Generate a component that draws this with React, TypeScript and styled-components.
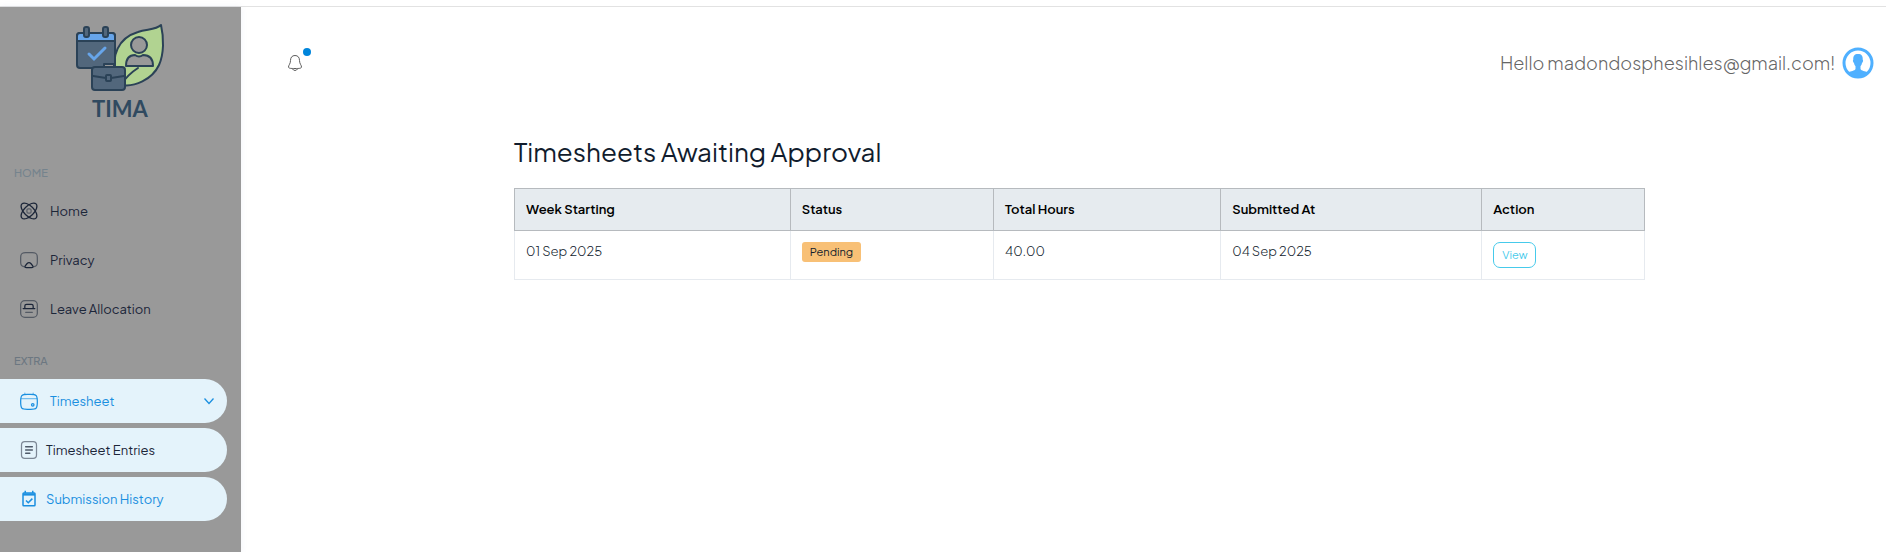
import React from "react";
import styled, { createGlobalStyle, css } from "styled-components";

const GlobalStyle = createGlobalStyle`
  * { box-sizing: border-box; }
  body {
    margin: 0;
    background: #fff;
    color: #2a3547;
    font-family: "Plus Jakarta Sans", Inter, "Liberation Sans", sans-serif;
    font-size: 13px;
    line-height: 20px;
  }
`;

const Page = styled.div`
  display: flex;
  flex-direction: column;
  min-height: 100vh;
  padding-top: 6px;
`;

const Shell = styled.div`
  display: flex;
  flex: 1;
  border-top: 1px solid #e2e2e2;
`;

const Sidebar = styled.aside`
  flex: 0 0 241px;
  padding: 16px 14px 32px 0;
  background: #999;
  box-shadow: 0 0 6px rgba(120, 140, 190, 0.1);
`;

const Brand = styled.a`
  display: block;
  width: 92px;
  margin: 0 0 0 74px;
`;

const Nav = styled.nav`
  padding-top: 35px;
`;

const Caption = styled.h2<{ $tone: string; $spaced?: boolean }>`
  margin: ${(p) => (p.$spaced ? "20px 0 8px" : "0 0 6px")};
  padding-left: 14px;
  color: ${(p) => p.$tone};
  font-size: 11px;
  font-weight: 500;
  line-height: 20px;
`;

const List = styled.ul`
  display: flex;
  flex-direction: column;
  gap: 5px;
  margin: 0;
  padding: 0;
  list-style: none;
`;

const itemStyle = css<{ $filled?: boolean; $active?: boolean; $nested?: boolean }>`
  display: flex;
  align-items: center;
  gap: ${(p) => (p.$nested ? "7px" : "11px")};
  width: 100%;
  height: 44px;
  padding: 0 11px 0 19px;
  border: 0;
  border-radius: 0 22px 22px 0;
  background: ${(p) => (p.$filled ? "#e4f3fb" : "transparent")};
  color: ${(p) => (p.$active ? "#1a8fe0" : "#1c2639")};
  font: inherit;
  font-weight: 400;
  text-align: left;
  text-decoration: none;
  cursor: pointer;
`;

const NavLink = styled.a`
  ${itemStyle}
`;

const NavToggle = styled.button`
  ${itemStyle}
`;

const NavLabel = styled.span`
  flex: 1;
`;

const IconBox = styled.span`
  display: flex;
  flex: 0 0 20px;
  justify-content: center;
`;

const Main = styled.main`
  flex: 1;
  min-width: 0;
`;

const TopBar = styled.header`
  display: flex;
  align-items: center;
  justify-content: space-between;
  padding: 40px 12px 32px 45px;
`;

const BellButton = styled.button`
  position: relative;
  display: flex;
  padding: 0;
  border: 0;
  background: none;
  cursor: pointer;
`;

const Dot = styled.span`
  position: absolute;
  top: -5px;
  right: -7px;
  width: 8px;
  height: 8px;
  border-radius: 50%;
  background: #0085db;
`;

const Account = styled.a`
  display: flex;
  align-items: center;
  gap: 7px;
  color: #666;
  font-size: 18px;
  font-weight: 300;
  line-height: 32px;
  text-decoration: none;
`;

const Content = styled.section`
  max-width: 1211px;
  margin: 0 auto;
  padding: 24px 24px 24px 56px;
`;

const Title = styled.h1`
  margin: 0 0 19px;
  color: #111c2d;
  font-size: 26px;
  font-weight: 400;
  line-height: 34px;
`;

const Table = styled.table`
  width: 100%;
  border-collapse: collapse;
  table-layout: fixed;
  font-size: 13px;
`;

const Col = styled.col<{ $share: number }>`
  width: ${(p) => p.$share}%;
`;

const HeadCell = styled.th`
  padding: 10px 11px 11px;
  border: 1px solid #b6babe;
  background: #e6ebef;
  color: #000;
  font-weight: 600;
  text-align: left;
`;

const Cell = styled.td`
  height: 49px;
  padding: 11px;
  border: 1px solid #e6eaef;
  color: #111c2d;
  font-weight: 300;
  line-height: 18px;
  vertical-align: top;
`;

const Badge = styled.span`
  display: block;
  width: fit-content;
  padding: 0 8px;
  border-radius: 3px;
  background: #f8c076;
  color: #111c2d;
  font-size: 11px;
  font-weight: 400;
  line-height: 20px;
`;

const ViewButton = styled.button`
  display: block;
  padding: 1px 8px;
  border: 1px solid #46caeb;
  border-radius: 7px;
  background: #fff;
  color: #46caeb;
  font-family: inherit;
  font-size: 11px;
  font-weight: 400;
  line-height: 22px;
  cursor: pointer;
`;

const Logo = () => (
  <svg width="92" height="100" viewBox="0 0 92 100" role="img" aria-label="TIMA">
    <g stroke="#2b4257" strokeWidth="2" strokeLinejoin="round" strokeLinecap="round">
      <path d="M42 52C37 33 44 15 64 9C73 6 82 7 87 2C90 15 90 31 85 42C78 57 60 64 48 62Z" fill="#b1d391" />
      <path d="M47 62Q53 52 64 45" fill="none" />
      <path d="M52 43C52 35 56 32 61 32Q65 35 69 32C75 32 79 35 79 43Z" fill="#999" />
      <circle cx="65" cy="22" r="8" fill="#999" />
      <rect x="3" y="10" width="38" height="35" rx="3" fill="#52677c" />
      <path d="M3 18V13Q3 10 6 10H38Q41 10 41 13V18Z" fill="#67a5ea" />
      <rect x="10" y="4" width="5" height="10" rx="2" fill="#52677c" />
      <rect x="29" y="4" width="5" height="10" rx="2" fill="#52677c" />
      <path d="M30 45V41H40V45" fill="#999" />
      <rect x="18" y="44" width="33" height="23" rx="3" fill="#52677c" />
      <path d="M19 53L32 55H37L50 53" fill="none" />
      <rect x="32" y="52" width="5" height="6" rx="1" fill="#52677c" />
    </g>
    <path d="M15 31L20 36L31 25" fill="none" stroke="#67a5ea" strokeWidth="3" strokeLinecap="round" />
    <text x="46" y="94" textAnchor="middle" fill="#304a60" fontFamily='Lato, sans-serif' fontWeight="700" fontSize="22">TIMA</text>
  </svg>
);

const Icon = ({ size = 20, children }: { size?: number; children: React.ReactNode }) => (
  <IconBox>
    <svg width={size} height={size} viewBox="0 0 24 24" fill="none" stroke="currentColor" strokeWidth="1.5" strokeLinecap="round" aria-hidden="true">
      {children}
    </svg>
  </IconBox>
);

const AtomIcon = () => (
  <Icon>
    <ellipse cx="12" cy="12" rx="12" ry="6" transform="rotate(45 12 12)" />
    <ellipse cx="12" cy="12" rx="12" ry="6" transform="rotate(-45 12 12)" />
    <rect x="9.5" y="9.5" width="5" height="5" rx="1.5" opacity=".5" />
  </Icon>
);

const AirplayIcon = () => (
  <Icon>
    <path opacity=".55" d="M6 20C3 19.500 2 18 2 15V9C2 4.500 3.500 3 8 3H16C20.500 3 22 4.500 22 9V15C22 18 21 19.500 18 20" />
    <path d="M9.500 16.500C11.500 14.500 12.500 14.500 14.500 16.500L16.500 19C17.500 20.500 17 21 15 21H9C7 21 6.500 20.500 7.500 19Z" />
  </Icon>
);

const LeaveIcon = () => (
  <Icon>
    <rect opacity=".55" x="2" y="2" width="20" height="20" rx="5" />
    <path d="M5 11.500H19M7 11V8.500Q7 6.500 9 6.500H15Q17 6.500 17 8.500V11" />
    <path opacity=".55" d="M8 16H16" />
  </Icon>
);

const CalendarIcon = () => (
  <Icon>
    <path d="M2 13C2 5 3 4 10 4H14C21 4 22 5 22 13C22 21 21 22 14 22H10C3 22 2 21 2 13Z" />
    <path opacity=".55" d="M7 4V2.500M17 4V2.500M2.500 9H21.500" />
    <circle cx="16.500" cy="16.500" r="1.500" />
  </Icon>
);

const DocumentIcon = () => (
  <Icon>
    <rect x="3" y="2" width="18" height="20" rx="4" stroke="#7c8795" />
    <path d="M8 8H16M8 12H16M8 16H13" stroke="#4e5968" strokeWidth="1.8" />
  </Icon>
);

const CalendarCheckIcon = () => (
  <Icon size={18}>
    <g strokeWidth="2" strokeLinecap="butt">
      <rect x="4" y="4" width="16" height="17" rx="1" />
      <path d="M4 6H20" strokeWidth="3" />
      <path d="M7 1V4M17 1V4M8 14L11 17L16.500 11.500" />
    </g>
  </Icon>
);

const Bell = () => (
  <svg width="18" height="20" viewBox="0 0 18 20" fill="none" stroke="#5c5c5c" strokeLinejoin="round" aria-hidden="true">
    <path d="M9 2.500C6 2.500 4.500 4.500 4.500 7.500C4.500 11 2.500 12 2.500 14C2.500 15.500 5 15.500 9 15.500C13 15.500 15.500 15.500 15.500 14C15.500 12 13.500 11 13.500 7.500C13.500 4.500 12 2.500 9 2.500Z" />
    <path d="M6 15.500Q9 19.500 12 15.500" />
  </svg>
);

const Avatar = () => (
  <svg width="32" height="32" viewBox="0 0 32 32" aria-hidden="true">
    <circle cx="16" cy="16" r="14" fill="#fff" stroke="#4fb0ff" strokeWidth="3" />
    <path d="M16 7C12.500 7 11 9 11.300 12.500C10.500 13 11 15.500 12 16C12.300 17.500 12.800 18.500 13.500 19.200V22C12.500 24 9 24 6.500 25.300C9 29 12.500 30.300 16 30.300C19.500 30.300 23 29 25.500 25.300C23 24 19.500 24 18.500 22V19.200C19.200 18.500 19.700 17.500 20 16C21 15.500 21.500 13 20.700 12.500C21 9 19.500 7 16 7Z" fill="#4fb0ff" />
  </svg>
);

const Chevron = () => (
  <svg width="14" height="14" viewBox="0 0 14 14" fill="none" stroke="currentColor" aria-hidden="true">
    <path d="M2.500 4.500L7 9.500L11.500 4.500" strokeWidth="1.300" />
  </svg>
);

const columns = [
  { label: "Week Starting", share: 24.4 },
  { label: "Status", share: 18 },
  { label: "Total Hours", share: 20.1 },
  { label: "Submitted At", share: 23.1 },
  { label: "Action", share: 14.4 },
];

const timesheets = [
  { week: "01 Sep 2025", status: "Pending", hours: "40.00", submitted: "04 Sep 2025" },
];

export default function App() {
  return (
    <Page>
      <GlobalStyle />
      <Shell>
        <Sidebar>
          <Brand href="#"><Logo /></Brand>
          <Nav aria-label="Main">
            <Caption $tone="#75838d">HOME</Caption>
            <List>
              <li><NavLink href="#home"><AtomIcon /><NavLabel>Home</NavLabel></NavLink></li>
              <li><NavLink href="#privacy"><AirplayIcon /><NavLabel>Privacy</NavLabel></NavLink></li>
              <li><NavLink href="#leave"><LeaveIcon /><NavLabel>Leave Allocation</NavLabel></NavLink></li>
            </List>
            <Caption $tone="#6c7781" $spaced>EXTRA</Caption>
            <List>
              <li><NavToggle type="button" aria-expanded="true" $filled $active><CalendarIcon /><NavLabel>Timesheet</NavLabel><Chevron /></NavToggle></li>
              <li><NavLink href="#entries" $filled $nested><DocumentIcon /><NavLabel>Timesheet Entries</NavLabel></NavLink></li>
              <li><NavLink href="#history" aria-current="page" $filled $active $nested><CalendarCheckIcon /><NavLabel>Submission History</NavLabel></NavLink></li>
            </List>
          </Nav>
        </Sidebar>
        <Main>
          <TopBar>
            <BellButton type="button" aria-label="Notifications"><Bell /><Dot /></BellButton>
            <Account href="#profile">Hello madondosphesihles@gmail.com!<Avatar /></Account>
          </TopBar>
          <Content>
            <Title>Timesheets Awaiting Approval</Title>
            <Table>
              <colgroup>{columns.map((c) => <Col key={c.label} $share={c.share} />)}</colgroup>
              <thead>
                <tr>{columns.map((c) => <HeadCell key={c.label} scope="col">{c.label}</HeadCell>)}</tr>
              </thead>
              <tbody>
                {timesheets.map((t) => (
                  <tr key={t.week}>
                    <Cell>{t.week}</Cell>
                    <Cell><Badge>{t.status}</Badge></Cell>
                    <Cell>{t.hours}</Cell>
                    <Cell>{t.submitted}</Cell>
                    <Cell><ViewButton type="button">View</ViewButton></Cell>
                  </tr>
                ))}
              </tbody>
            </Table>
          </Content>
        </Main>
      </Shell>
    </Page>
  );
}
